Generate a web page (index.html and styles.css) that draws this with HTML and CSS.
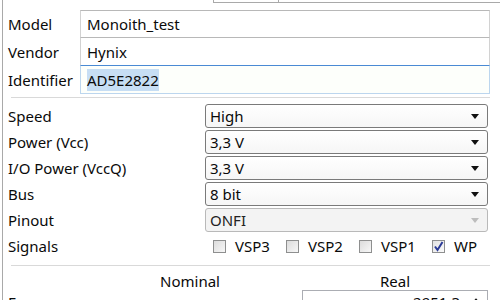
FILE: index.html
```html
<!DOCTYPE html>
<html lang="en">
<head>
  <meta charset="UTF-8">
  <title>Chip settings</title>
  <link rel="stylesheet" href="styles.css">
</head>
<body>
  <div class="window">
    <div class="tabstrip">
      <div class="tab active"></div>
      <div class="tab"></div>
      <div class="tab rest"></div>
    </div>
    <div class="panel">
      <div class="ids">
        <label>Model</label>
        <div class="field">Monoith_test</div>
        <label>Vendor</label>
        <div class="field">Hynix</div>
        <label>Identifier</label>
        <div class="field focused"><span class="selected">AD5E2822</span></div>
      </div>

      <div class="sep"></div>

      <div class="params">
        <label>Speed</label>
        <div class="combo"><span>High</span><i class="arrow"></i></div>
        <label>Power (Vcc)</label>
        <div class="combo"><span>3,3 V</span><i class="arrow"></i></div>
        <label>I/O Power (VccQ)</label>
        <div class="combo"><span>3,3 V</span><i class="arrow"></i></div>
        <label>Bus</label>
        <div class="combo"><span>8 bit</span><i class="arrow"></i></div>
        <label>Pinout</label>
        <div class="combo disabled"><span>ONFI</span><i class="arrow"></i></div>
        <label>Signals</label>
        <div class="signals">
          <div class="check"><span class="box"></span>VSP3</div>
          <div class="check"><span class="box"></span>VSP2</div>
          <div class="check"><span class="box"></span>VSP1</div>
          <div class="check"><span class="box checked"><svg width="11" height="11" viewBox="0 0 11 11"><path d="M2 5.5 L4.5 9 L9.5 1" fill="none" stroke="#2b3b96" stroke-width="2"/></svg></span>WP</div>
        </div>
      </div>

      <div class="sep"></div>

      <div class="timing">
        <div></div>
        <div class="head">Nominal</div>
        <div class="head real">Real</div>
        <label>Frequency</label>
        <div></div>
        <div class="spin"><span>2951.3</span><svg width="12" height="9" viewBox="0 0 12 9"><path d="M1 8 L6 2 L11 8" fill="none" stroke="#111" stroke-width="2.4"/></svg></div>
      </div>
    </div>
  </div>
</body>
</html>
```

FILE: styles.css
```css
body {
  margin: 0;
  width: 500px;
  height: 300px;
  overflow: hidden;
  background-color: #fff;
  font-family: "Noto Sans", "Open Sans", sans-serif;
  font-size: 15px;
  color: #0a0a0a;
}

.window {
  margin-left: 2px;
  border-left: 1px solid #a9a9a9;
  height: 300px;
}

.tabstrip {
  display: flex;
  height: 3px;
}

.tab {
  width: 64px;
  border-left: 1px solid #a9a9a9;
  border-bottom: 1px solid #a9a9a9;
}

.tab.active {
  width: 210px;
  border: none;
}

.tab.rest {
  flex: 1;
}

.panel {
  padding: 7px 10px 0 5px;
}

label {
  display: flex;
  align-items: center;
}

/* identity fields */
.ids {
  display: grid;
  grid-template-columns: 72px 1fr;
  grid-auto-rows: 28px;
}

.field {
  display: flex;
  align-items: center;
  padding-left: 6px;
  border: 1px solid #d2d2d2;
  border-top-color: #b8b8b8;
  margin-top: -1px;
}

.field:first-of-type {
  margin-top: 0;
}

.field.focused {
  border-color: #bcd6ee;
  border-top-color: #4a8ad4;
  background-color: #fdfffb;
}

.selected {
  background-color: #c7def4;
  padding: 1px 0;
  line-height: 20px;
}

.sep {
  height: 1px;
  background-color: #d9d9d9;
  margin-left: 3px;
}

.ids + .sep {
  margin-top: 3px;
}

/* parameters */
.params {
  display: grid;
  grid-template-columns: 197px 1fr;
  grid-auto-rows: 24px;
  row-gap: 2px;
  margin-top: 6px;
  margin-right: 2px;
}

.combo {
  display: flex;
  align-items: center;
  justify-content: space-between;
  padding: 0 8px 0 4px;
  border: 1px solid #7a7a7a;
  border-radius: 3px;
  background: linear-gradient(#ffffff, #f6f6f6);
}

.arrow {
  width: 0;
  height: 0;
  border-left: 4px solid transparent;
  border-right: 4px solid transparent;
  border-top: 5px solid #111;
}

.combo.disabled {
  border-color: #b9b9b9;
  background: #f3f3f3;
  color: #222;
}

.combo.disabled .arrow {
  border-top-color: #bdbdbd;
}

.signals {
  display: flex;
  align-items: center;
  justify-content: space-between;
  padding: 0 11px 0 8px;
}

.check {
  display: flex;
  align-items: center;
  gap: 9px;
}

.box {
  width: 11px;
  height: 11px;
  border: 1px solid #8e8f8f;
  background: linear-gradient(135deg, #dcdcdc, #f7f7f7);
  display: flex;
  align-items: center;
  justify-content: center;
}

.box.checked {
  background: linear-gradient(135deg, #e2e2e2, #fafafa);
}

.params + .sep {
  margin-top: 7px;
}

/* timing */
.timing {
  display: grid;
  grid-template-columns: 90px 184px 206px;
  grid-template-rows: 17px 24px;
  margin-top: 7px;
}

.head {
  text-align: center;
  line-height: 17px;
}

.head.real {
  padding-left: 20px;
}

.spin {
  display: flex;
  align-items: center;
  justify-content: flex-end;
  gap: 10px;
  margin-left: 20px;
  padding-right: 5px;
  border: 1px solid #abadb3;
}
```
